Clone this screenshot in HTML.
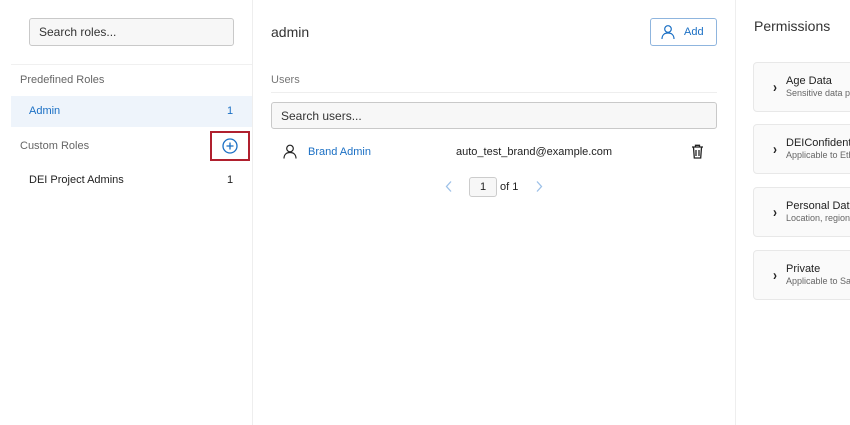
<!DOCTYPE html>
<html><head><style>
*{box-sizing:border-box;margin:0;padding:0}
body{width:850px;height:425px;overflow:hidden;background:#fff;font-family:"Liberation Sans",sans-serif;position:relative;color:#222}
.abs{position:absolute}
.input{border:1px solid #c9c9c9;border-radius:3px;background:#f7f7f7;font-size:12px;color:#333;padding-left:9px;display:flex;align-items:center}
.card{position:absolute;left:753px;width:110px;height:50px;border:1px solid #e8e8e8;border-radius:4px;background:#fafafa;overflow:hidden;white-space:nowrap}
.card .t{position:absolute;left:32px;top:12px;font-size:11px;color:#222}
.card .s{position:absolute;left:32px;top:25px;font-size:9px;color:#666}
.card .c{position:absolute;left:19px;top:17px;font-size:12px;font-weight:bold;color:#222;transform:scaleY(1.2)}
</style></head><body>
<div class="abs" style="left:252px;top:0;width:1px;height:425px;background:#eee"></div>
<div class="abs" style="left:735px;top:0;width:1px;height:425px;background:#eee"></div>

<div class="abs input" style="left:29px;top:18px;width:205px;height:28px">Search roles...</div>
<div class="abs" style="left:11px;top:64px;width:241px;height:1px;background:#f0f0f0"></div>
<div class="abs" style="left:20px;top:74px;font-size:11px;color:#666">Predefined Roles</div>
<div class="abs" style="left:11px;top:96px;width:241px;height:31px;background:#eef4fb"></div>
<div class="abs" style="left:29px;top:105px;font-size:11px;color:#1a6fc4">Admin</div>
<div class="abs" style="left:227px;top:105px;font-size:11px;color:#1a6fc4">1</div>
<div class="abs" style="left:20px;top:140px;font-size:11px;color:#666">Custom Roles</div>
<div class="abs" style="left:210px;top:131px;width:40px;height:30px;border:2px solid #b0202e"></div>
<svg class="abs" style="left:222px;top:138px" width="16" height="16" viewBox="0 0 16 16"><circle cx="8" cy="8" r="7" fill="none" stroke="#1a6fc4" stroke-width="1.3"/><path d="M8 4.5v7M4.5 8h7" stroke="#1a6fc4" stroke-width="1.3"/></svg>
<div class="abs" style="left:29px;top:174px;font-size:11px;color:#222">DEI Project Admins</div>
<div class="abs" style="left:227px;top:174px;font-size:11px;color:#222">1</div>

<div class="abs" style="left:271px;top:24px;font-size:14px;color:#333">admin</div>
<div class="abs" style="left:650px;top:18px;width:67px;height:28px;border:1px solid #8fb5de;border-radius:3px;background:#fff"></div>
<svg class="abs" style="left:660px;top:24px" width="16" height="16" viewBox="0 0 16 16"><circle cx="8" cy="5" r="3.3" fill="none" stroke="#1a6fc4" stroke-width="1.2"/><path d="M2 15c0-4 2.5-6 6-6s6 2 6 6" fill="none" stroke="#1a6fc4" stroke-width="1.2"/></svg>
<div class="abs" style="left:684px;top:26px;font-size:11px;color:#1a6fc4">Add</div>
<div class="abs" style="left:271px;top:74px;font-size:11px;color:#777">Users</div>
<div class="abs" style="left:271px;top:92px;width:446px;height:1px;background:#eee"></div>
<div class="abs input" style="left:271px;top:102px;width:446px;height:27px">Search users...</div>
<svg class="abs" style="left:283px;top:144px" width="14" height="15" viewBox="0 0 14 15"><circle cx="7" cy="4.5" r="3.3" fill="none" stroke="#222" stroke-width="1.2"/><path d="M1 14.5c0-4 2.5-6 6-6s6 2 6 6" fill="none" stroke="#222" stroke-width="1.2"/></svg>
<div class="abs" style="left:308px;top:146px;font-size:11px;color:#1a6fc4">Brand Admin</div>
<div class="abs" style="left:456px;top:146px;font-size:11px;color:#222">auto_test_brand@example.com</div>
<svg class="abs" style="left:691px;top:144px" width="13" height="15" viewBox="0 0 13 15"><path d="M1 3h11M4.5 3V1.3h4V3M2.5 3.5l.8 10.5h6.4l.8-10.5M5 6v6M8 6v6" fill="none" stroke="#222" stroke-width="1.3"/></svg>
<svg class="abs" style="left:444px;top:180px" width="10" height="13" viewBox="0 0 10 13"><path d="M7 1.5L2.5 6.5 7 11.5" fill="none" stroke="#9cc0e8" stroke-width="1.3"/></svg>
<div class="abs" style="left:469px;top:177px;width:28px;height:20px;border:1px solid #ccc;border-radius:3px;background:#f7f7f7;font-size:11px;text-align:center;line-height:18px">1</div>
<div class="abs" style="left:500px;top:181px;font-size:11px;color:#222">of 1</div>
<svg class="abs" style="left:534px;top:180px" width="10" height="13" viewBox="0 0 10 13"><path d="M3 1.5L7.5 6.5 3 11.5" fill="none" stroke="#9cc0e8" stroke-width="1.3"/></svg>

<div class="abs" style="left:754px;top:18px;font-size:14px;color:#333">Permissions</div>
<div class="card" style="top:62px"><span class="c">›</span><span class="t">Age Data</span><span class="s">Sensitive data pertaining</span></div>
<div class="card" style="top:124px"><span class="c">›</span><span class="t">DEIConfidential</span><span class="s">Applicable to Ethnicity</span></div>
<div class="card" style="top:187px"><span class="c">›</span><span class="t">Personal Data</span><span class="s">Location, region</span></div>
<div class="card" style="top:250px"><span class="c">›</span><span class="t">Private</span><span class="s">Applicable to Sales</span></div>
</body></html>
